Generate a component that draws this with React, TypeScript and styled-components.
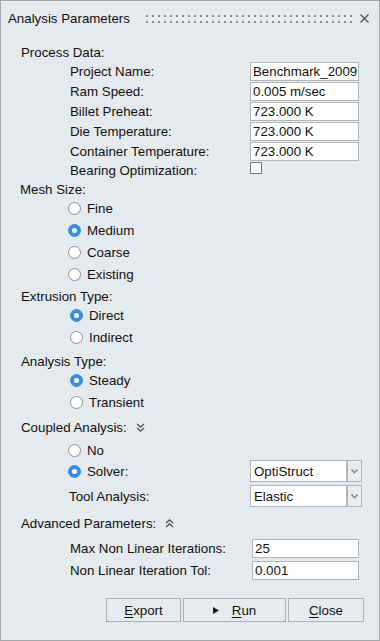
import React from "react";
import styled, { createGlobalStyle } from "styled-components";

const Global = createGlobalStyle`
  html, body { margin: 0; padding: 0; background: #e4eaee; }
  * { box-sizing: border-box; }
`;

const Window = styled.div`
  width: 380px;
  height: 641px;
  border: 1px solid #a3a7ab;
  background: #e4eaee;
  font-family: "Liberation Sans", Arial, sans-serif;
  font-size: 13.3px;
  color: #111;
  display: flex;
  flex-direction: column;
  overflow: hidden;
`;

const TitleBar = styled.div`
  height: 35px;
  display: flex;
  align-items: center;
  padding: 0 10px 0 7px;
`;

const Title = styled.span`
  white-space: nowrap;
`;

const Grip = styled.div`
  flex: 1;
  margin: 0 7px 0 16px;
  display: flex;
  flex-direction: column;
  gap: 4px;
`;

const DotRow = styled.div`
  height: 2px;
  background: repeating-linear-gradient(90deg, #8c8c8c 0 2px, transparent 2px 6px);
`;

const CloseX = styled.svg`
  width: 9px;
  height: 9px;
  display: block;
`;

const Content = styled.div`
  padding-left: 19px;
  display: flex;
  flex-direction: column;
`;

const Row = styled.div<{ $h: number; $mt?: number; $pl?: number }>`
  height: ${(p) => p.$h}px;
  margin-top: ${(p) => p.$mt ?? 0}px;
  padding-left: ${(p) => p.$pl ?? 0}px;
  display: flex;
  align-items: center;
  white-space: nowrap;
`;

const Label = styled.span<{ $w?: number }>`
  width: ${(p) => (p.$w ? `${p.$w}px` : "auto")};
  flex: 0 0 auto;
`;

const TextBox = styled.div<{ $w: number; $h: number }>`
  width: ${(p) => p.$w}px;
  height: ${(p) => p.$h}px;
  background: #fff;
  border: 1px solid #b3b6b9;
  padding-left: 2px;
  display: flex;
  align-items: center;
  overflow: hidden;
  white-space: nowrap;
`;

const Check = styled.span`
  width: 12px;
  height: 12px;
  border: 1px solid #7c7c7c;
  background: #fff;
  margin-bottom: 4px;
`;

const RadioDot = styled.span<{ $on?: boolean }>`
  width: 13px;
  height: 13px;
  border-radius: 50%;
  flex: 0 0 auto;
  margin-right: 6px;
  border: 1px solid ${(p) => (p.$on ? "#3a8de6" : "#8e8e8e")};
  background: ${(p) => (p.$on ? "#3a8de6" : "#fff")};
  display: flex;
  align-items: center;
  justify-content: center;
  &::after {
    content: "";
    width: 5px;
    height: 5px;
    border-radius: 50%;
    background: #fff;
    display: ${(p) => (p.$on ? "block" : "none")};
  }
`;

const Combo = styled.div`
  display: flex;
  height: 22px;
`;

const ComboField = styled.div`
  width: 97px;
  height: 22px;
  background: #fff;
  border: 1px solid #b3b6b9;
  padding-left: 3px;
  display: flex;
  align-items: center;
`;

const ComboButton = styled.div`
  width: 15px;
  height: 22px;
  border: 1px solid #b3b6b9;
  background: #e8edf0;
  display: flex;
  align-items: center;
  justify-content: center;
`;

const Chevrons = styled.svg`
  margin-left: 9px;
  display: block;
`;

const ButtonBar = styled.div`
  display: flex;
  gap: 2px;
  margin-top: 18px;
  padding-left: 86px;
`;

const Btn = styled.div<{ $w: number }>`
  width: ${(p) => p.$w}px;
  height: 24px;
  border: 1px solid #adb0b3;
  background: #e6ebee;
  display: flex;
  align-items: center;
  justify-content: center;
  gap: 13px;
  u { text-decoration: underline; text-underline-offset: 2px; }
`;

const Radio = ({ on, label }: { on?: boolean; label: string }) => (
  <>
    <RadioDot $on={on} />
    <Label>{label}</Label>
  </>
);

const Field = ({ label, value, mt, boxW = 109 }: { label: string; value: string; mt?: number; boxW?: number }) => (
  <Row $h={20} $pl={50} $mt={mt}>
    <Label $w={180}>{label}</Label>
    <TextBox $w={boxW} $h={19}>{value}</TextBox>
  </Row>
);

const ComboBox = ({ value }: { value: string }) => (
  <Combo>
    <ComboField>{value}</ComboField>
    <ComboButton>
      <svg width="7" height="5" viewBox="0 0 7 5">
        <path d="M0.5 0.5 L3.5 3.5 L6.5 0.5" fill="none" stroke="#8d8d8d" strokeWidth="1.6" />
      </svg>
    </ComboButton>
  </Combo>
);

export default function App() {
  return (
    <>
      <Global />
      <Window>
        <TitleBar>
          <Title>Analysis Parameters</Title>
          <Grip>
            <DotRow />
            <DotRow />
          </Grip>
          <CloseX viewBox="0 0 9 9">
            <path d="M0.5 0.5 L8.5 8.5 M8.5 0.5 L0.5 8.5" stroke="#4a4a4a" strokeWidth="1.2" />
          </CloseX>
        </TitleBar>
        <Content>
          <Row $h={18} $mt={7} $pl={1}>Process Data:</Row>
          <Field label="Project Name:" value="Benchmark_2009" />
          <Field label="Ram Speed:" value="0.005 m/sec" />
          <Field label="Billet Preheat:" value="723.000 K" />
          <Field label="Die Temperature:" value="723.000 K" />
          <Field label="Container Temperature:" value="723.000 K" />
          <Row $h={18} $pl={50}>
            <Label $w={180}>Bearing Optimization:</Label>
            <Check />
          </Row>

          <Row $h={18} $mt={1}>Mesh Size:</Row>
          <Row $h={20} $pl={48}><Radio label="Fine" /></Row>
          <Row $h={20} $mt={2} $pl={48}><Radio on label="Medium" /></Row>
          <Row $h={20} $mt={2} $pl={48}><Radio label="Coarse" /></Row>
          <Row $h={20} $mt={2} $pl={48}><Radio label="Existing" /></Row>

          <Row $h={18} $mt={3} $pl={1}>Extrusion Type:</Row>
          <Row $h={20} $pl={50}><Radio on label="Direct" /></Row>
          <Row $h={20} $mt={2} $pl={50}><Radio label="Indirect" /></Row>

          <Row $h={18} $mt={5} $pl={1}>Analysis Type:</Row>
          <Row $h={20} $pl={50}><Radio on label="Steady" /></Row>
          <Row $h={20} $mt={2} $pl={50}><Radio label="Transient" /></Row>

          <Row $h={18} $mt={6} $pl={1}>
            Coupled Analysis:
            <Chevrons width="9" height="9" viewBox="0 0 9 9">
              <path d="M1 1 L4.5 4 L8 1 M1 5 L4.5 8 L8 5" fill="none" stroke="#555" strokeWidth="1.4" />
            </Chevrons>
          </Row>
          <Row $h={20} $mt={4} $pl={48}><Radio label="No" /></Row>
          <Row $h={22} $pl={48}>
            <RadioDot $on />
            <Label $w={163}>Solver:</Label>
            <ComboBox value="OptiStruct" />
          </Row>
          <Row $h={22} $mt={3} $pl={49}>
            <Label $w={181}>Tool Analysis:</Label>
            <ComboBox value="Elastic" />
          </Row>

          <Row $h={18} $mt={7} $pl={1}>
            Advanced Parameters:
            <Chevrons width="9" height="9" viewBox="0 0 9 9">
              <path d="M1 4 L4.5 1 L8 4 M1 8 L4.5 5 L8 8" fill="none" stroke="#555" strokeWidth="1.4" />
            </Chevrons>
          </Row>
          <Row $h={20} $mt={6} $pl={50}>
            <Label $w={182}>Max Non Linear Iterations:</Label>
            <TextBox $w={107} $h={19}>25</TextBox>
          </Row>
          <Row $h={20} $mt={2} $pl={50}>
            <Label $w={182}>Non Linear Iteration Tol:</Label>
            <TextBox $w={107} $h={19}>0.001</TextBox>
          </Row>

          <ButtonBar>
            <Btn $w={75}><span><u>E</u>xport</span></Btn>
            <Btn $w={103}>
              <svg width="6" height="7" viewBox="0 0 6 7">
                <path d="M0 0 L6 3.5 L0 7 Z" fill="#1a1a1a" />
              </svg>
              <span><u>R</u>un</span>
            </Btn>
            <Btn $w={76}><span><u>C</u>lose</span></Btn>
          </ButtonBar>
        </Content>
      </Window>
    </>
  );
}
